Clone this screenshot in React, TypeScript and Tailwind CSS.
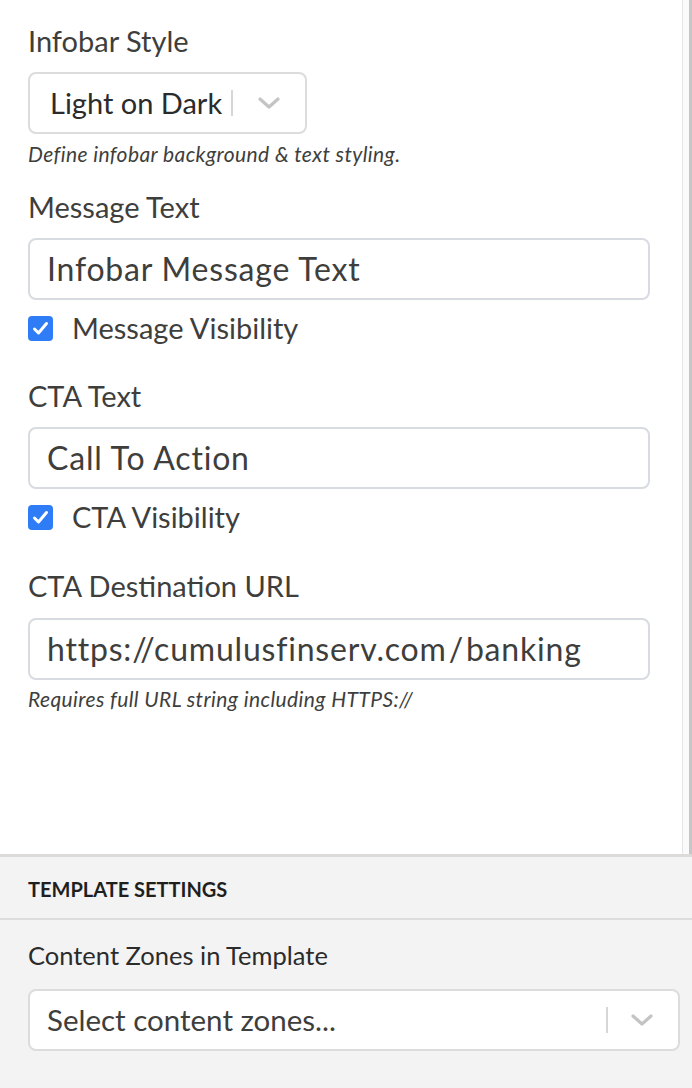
import React from "react";

const Chevron = () => (
  <svg width="24" height="14" viewBox="0 0 24 14" fill="none">
    <path d="M3 3 L12 11 L21 3" stroke="#c4c4c4" strokeWidth="3.2" strokeLinecap="round" strokeLinejoin="round" />
  </svg>
);

const Check = () => (
  <div className="w-[25px] h-[25px] rounded-[4px] bg-[#2f7df6] flex items-center justify-center">
    <svg width="17" height="15" viewBox="0 0 17 15" fill="none">
      <path d="M2.5 8 L6.5 12 L14.5 2.5" stroke="white" strokeWidth="3" strokeLinecap="round" strokeLinejoin="round" />
    </svg>
  </div>
);

const Label = ({ children }: { children: React.ReactNode }) => (
  <div className="text-[29px] leading-[32px] text-[#3e3e3c]">{children}</div>
);

const Input = ({ children }: { children: React.ReactNode }) => (
  <div className="h-[62px] w-full rounded-[8px] border-2 border-[#d8dbe0] bg-white flex items-center pl-[17px] text-[32px] tracking-[0.8px] text-[#3e3e3c] whitespace-nowrap">
    {children}
  </div>
);

export default function App() {
  return (
    <div className="w-[692px] h-[1088px] bg-[#f3f3f3] flex flex-col overflow-hidden" style={{ fontFamily: "Lato, 'Noto Sans', sans-serif" }}>
      <div className="flex h-[857px] border-b-[3px] border-[#dcdbda] bg-white">
        <div className="flex-1 pl-[28px] pr-[32px] flex flex-col">
          <div className="mt-[25px]">
            <Label>Infobar Style</Label>
          </div>
          <div className="mt-[15px] h-[62px] w-[279px] rounded-[8px] border-2 border-[#dcdcdc] flex items-center pl-[20px] text-[29px] text-[#2b2b2b]">
            <span>Light on Dark</span>
            <div className="ml-[9px] w-[2px] h-[26px] bg-[#d6d6d6]" />
            <div className="ml-[24px] flex items-center"><Chevron /></div>
          </div>
          <div className="mt-[8px] text-[21px] leading-[24px] italic tracking-[0.4px] text-[#3e3e3c]">Define infobar background &amp; text styling.</div>
          <div className="mt-[25px]">
            <Label>Message Text</Label>
          </div>
          <div className="mt-[15px]"><Input>Infobar Message Text</Input></div>
          <div className="mt-[12px] flex items-center gap-[19px] h-[32px]">
            <Check />
            <span className="text-[29px] text-[#3e3e3c]">Message Visibility</span>
          </div>
          <div className="mt-[36px]">
            <Label>CTA Text</Label>
          </div>
          <div className="mt-[15px]"><Input>Call To Action</Input></div>
          <div className="mt-[12px] flex items-center gap-[19px] h-[32px]">
            <Check />
            <span className="text-[29px] text-[#3e3e3c]">CTA Visibility</span>
          </div>
          <div className="mt-[37px]">
            <Label>CTA Destination URL</Label>
          </div>
          <div className="mt-[16px]"><Input>https://cumulusfinserv.com<span className="mx-[2px]">/</span>banking</Input></div>
          <div className="mt-[7px] text-[21px] leading-[24px] italic tracking-[0.4px] text-[#3e3e3c]">Requires full URL string including HTTPS://</div>
        </div>
        <div className="w-[10px] flex border-l border-[#e6e6e6] bg-[#fafafa]">
          <div className="flex-1" />
          <div className="w-[3px] bg-[#c6c6c6]" />
        </div>
      </div>
      <div className="h-[63px] pt-[3px] border-b-2 border-[#dddddd] flex items-center pl-[28px] text-[20px] font-bold text-[#1f1f1f] uppercase">
        Template Settings
      </div>
      <div className="pl-[28px] pr-[12px] flex flex-col">
        <div className="mt-[20px] text-[25.5px] leading-[30px] text-[#2b2b2b]">Content Zones in Template</div>
        <div className="mt-[19px] h-[62px] w-full rounded-[8px] border-2 border-[#dcdcdc] bg-white flex items-center pl-[17px] text-[29.5px] text-[#3e3e3c]">
          <span className="flex-1">Select content zones...</span>
          <div className="w-[2px] h-[26px] bg-[#d6d6d6]" />
          <div className="ml-[22px] mr-[24px] flex items-center"><Chevron /></div>
        </div>
      </div>
    </div>
  );
}
